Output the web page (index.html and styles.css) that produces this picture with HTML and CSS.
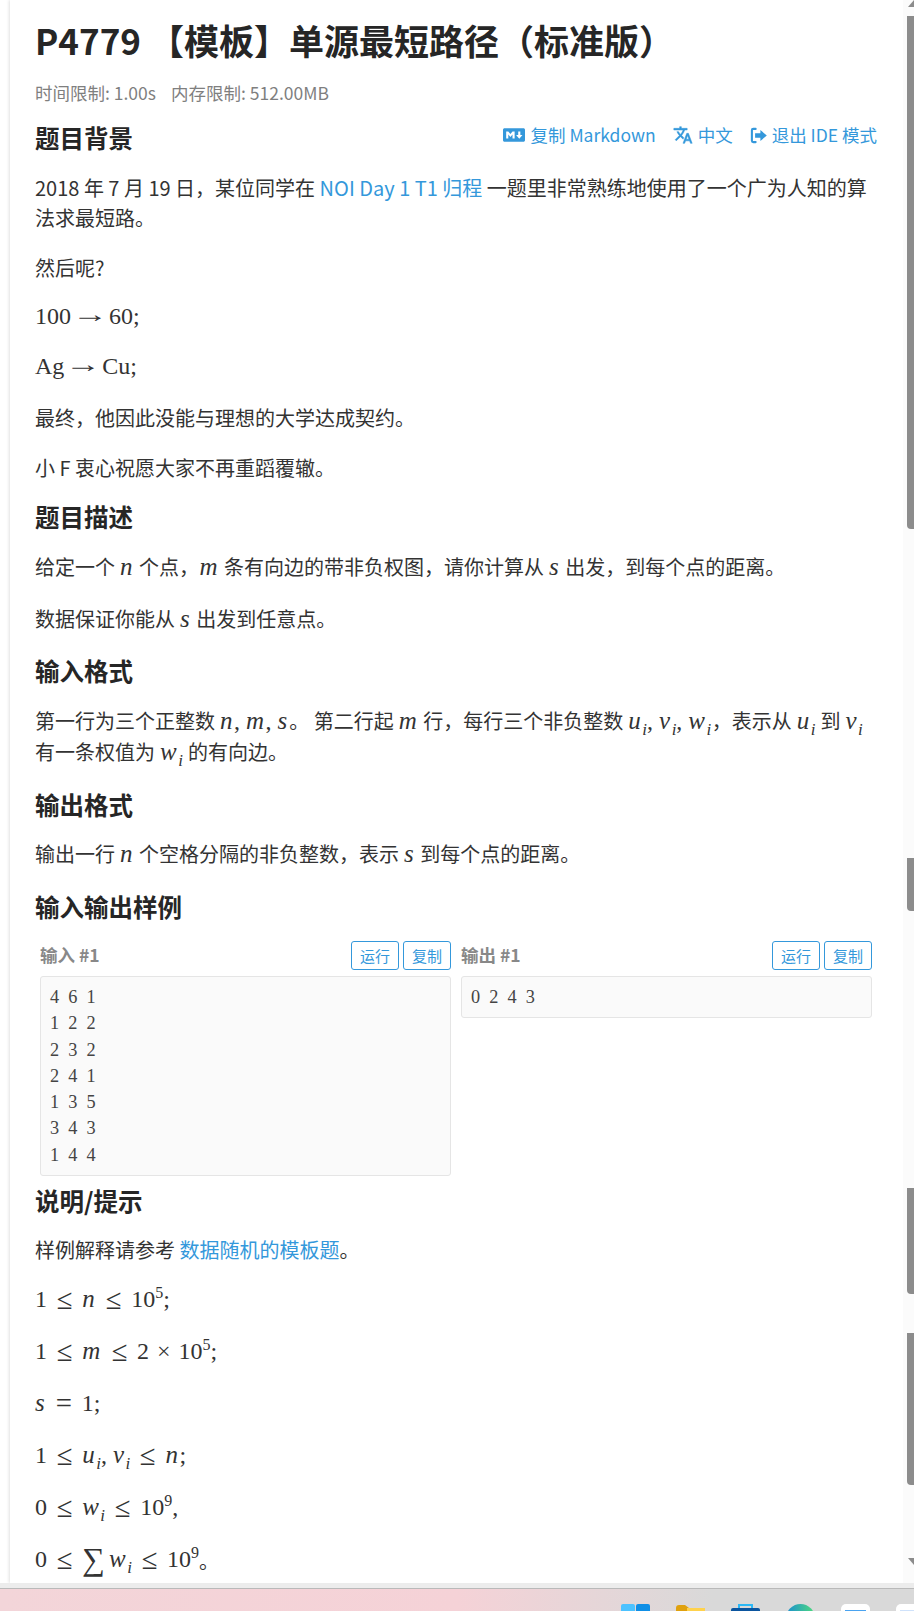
FILE: index.html
```html
<!DOCTYPE html>
<html lang="zh-CN">
<head>
  <meta charset="UTF-8">
  <title>P4779 【模板】单源最短路径（标准版）</title>
  <link rel="stylesheet" href="styles.css">
</head>
<body>
  <div class="window">
    <main class="content">
      <h1>P4779 【模板】单源最短路径（标准版）</h1>
      <div class="limits"><span>时间限制: 1.00s</span><span>内存限制: 512.00MB</span></div>

      <div class="section-head">
        <h2>题目背景</h2>
        <div class="actions">
          <a class="action">
            <svg class="icon icon-md" viewBox="0 0 640 512"><path d="M593.8 59.1H46.2C20.7 59.1 0 79.8 0 105.2v301.5c0 25.5 20.7 46.2 46.2 46.2h547.7c25.5 0 46.2-20.7 46.1-46.1V105.2c0-25.4-20.7-46.1-46.2-46.1zM338.5 360.6H277v-120l-61.5 76.9-61.5-76.9v120H92.3V151.4h61.5l61.5 76.9 61.5-76.9h61.5v209.2zm135.3 3.1L381.5 256H443V151.4h61.5V256H566z"/></svg>
            复制 Markdown
          </a>
          <a class="action">
            <svg class="icon icon-lang" viewBox="0 0 24 24"><path d="M12.87,15.07L10.33,12.56L10.36,12.53C12.1,10.59 13.34,8.36 14.07,6H17V4H10V2H8V4H1V6H12.17C11.5,7.92 10.44,9.75 9,11.35C8.07,10.32 7.3,9.19 6.69,8H4.69C5.42,9.63 6.42,11.17 7.67,12.56L2.58,17.58L4,19L9,14L12.11,17.11L12.87,15.07M18.5,10H16.5L12,22H14L15.12,19H19.87L21,22H23L18.5,10M15.88,17L17.5,12.67L19.12,17H15.88Z"/></svg>
            中文
          </a>
          <a class="action">
            <svg class="icon icon-exit" viewBox="0 0 18 18"><path d="M6 2H3.5A1.5 1.5 0 0 0 2 3.5v11A1.5 1.5 0 0 0 3.5 16H6" fill="none" stroke="currentColor" stroke-width="2.2" stroke-linecap="round"/><path d="M11 3.2L17.8 9 11 14.8V11.4H5.4V6.6H11z"/></svg>
            退出 IDE 模式
          </a>
        </div>
      </div>
      <p>2018 年 7 月 19 日，某位同学在 <a class="link">NOI Day 1 T1 归程</a> 一题里非常熟练地使用了一个广为人知的算法求最短路。</p>
      <p>然后呢?</p>
      <p class="formula"><span class="m">100<span class="arrow">→</span>60;</span></p>
      <p class="formula"><span class="m">Ag<span class="arrow">→</span>Cu;</span></p>
      <p>最终，他因此没能与理想的大学达成契约。</p>
      <p>小 F 衷心祝愿大家不再重蹈覆辙。</p>

      <h2 class="tight">题目描述</h2>
      <p class="tall">给定一个 <span class="m"><i>n</i></span> 个点，<span class="m"><i>m</i></span> 条有向边的带非负权图，请你计算从 <span class="m"><i>s</i></span> 出发，到每个点的距离。</p>
      <p class="tall">数据保证你能从 <span class="m"><i>s</i></span> 出发到任意点。</p>

      <h2>输入格式</h2>
      <p class="mid">第一行为三个正整数 <span class="m"><i>n</i>, <i>m</i>, <i>s</i></span>。 第二行起 <span class="m"><i>m</i></span> 行，每行三个非负整数 <span class="m"><i>u<sub>i</sub></i>, <i>v<sub>i</sub></i>, <i>w<sub>i</sub></i></span>，表示从 <span class="m"><i>u<sub>i</sub></i></span> 到 <span class="m"><i>v<sub>i</sub></i></span> 有一条权值为 <span class="m"><i>w<sub>i</sub></i></span> 的有向边。</p>

      <h2>输出格式</h2>
      <p>输出一行 <span class="m"><i>n</i></span> 个空格分隔的非负整数，表示 <span class="m"><i>s</i></span> 到每个点的距离。</p>

      <h2 class="loose">输入输出样例</h2>
      <div class="samples">
        <div class="sample">
          <div class="sample-head">
            <span class="sample-title">输入 #1</span>
            <div class="sample-btns"><button>运行</button><button>复制</button></div>
          </div>
          <pre>4 6 1
1 2 2
2 3 2
2 4 1
1 3 5
3 4 3
1 4 4</pre>
        </div>
        <div class="sample">
          <div class="sample-head">
            <span class="sample-title">输出 #1</span>
            <div class="sample-btns"><button>运行</button><button>复制</button></div>
          </div>
          <pre>0 2 4 3</pre>
        </div>
      </div>

      <h2 class="after-samples">说明/提示</h2>
      <p>样例解释请参考 <a class="link">数据随机的模板题</a>。</p>
      <p class="tall formula"><span class="m">1<span class="rel">≤</span><i>n</i><span class="rel">≤</span>10<sup>5</sup>;</span></p>
      <p class="tall formula"><span class="m">1<span class="rel">≤</span><i>m</i><span class="rel">≤</span>2<span class="bin">×</span>10<sup>5</sup>;</span></p>
      <p class="tall formula"><span class="m"><i>s</i><span class="rel">=</span>1;</span></p>
      <p class="tall formula"><span class="m">1<span class="rel">≤</span><i>u<sub>i</sub></i>, <i>v<sub>i</sub></i><span class="rel">≤</span><i>n</i>;</span></p>
      <p class="tall formula"><span class="m">0<span class="rel">≤</span><i>w<sub>i</sub></i><span class="rel">≤</span>10<sup>9</sup>,</span></p>
      <p class="tall formula"><span class="m">0<span class="rel">≤</span><span class="sum">∑</span><i>w<sub>i</sub></i><span class="rel">≤</span>10<sup>9</sup></span>。</p>
    </main>

    <div class="scrollbar">
      <div class="arrow-up"></div>
      <div class="thumb thumb-1"></div>
      <div class="thumb thumb-2"></div>
      <div class="thumb thumb-3"></div>
      <div class="thumb thumb-4"></div>
      <div class="arrow-down"></div>
    </div>
  </div>

  <footer class="taskbar">
    <svg class="task-icon" viewBox="0 0 29 29">
      <rect width="14" height="14" rx="2" fill="#4cc2ff"/>
      <rect x="15" width="14" height="14" rx="2" fill="#0f8fe6"/>
      <rect y="15" width="14" height="14" fill="#1a9ff0"/>
      <rect x="15" y="15" width="14" height="14" fill="#0a6fc4"/>
    </svg>
    <svg class="task-icon" viewBox="0 0 29 29">
      <path d="M0 4a3 3 0 0 1 3-3h6l4 3h16v25H0z" fill="#e0a10e"/>
      <rect y="3" width="29" height="26" fill="#ffd24d" clip-path="inset(1px 0 0 11px)"/>
    </svg>
    <svg class="task-icon" viewBox="0 0 29 29">
      <path d="M8 5V1h13v4" fill="none" stroke="#2bb8f5" stroke-width="2"/>
      <rect y="4" width="29" height="25" rx="2" fill="#0b559f"/>
    </svg>
    <svg class="task-icon" viewBox="0 0 29 29">
      <defs>
        <linearGradient id="edgeFill" x1="0" y1="0" x2="1" y2="0">
          <stop offset="0" stop-color="#1a8fd0"/>
          <stop offset="1" stop-color="#4fdc7c"/>
        </linearGradient>
      </defs>
      <circle cx="14.5" cy="14.5" r="14.5" fill="url(#edgeFill)"/>
    </svg>
    <div class="task-tile"><span></span></div>
    <div class="task-tile task-tile-cut"><span></span></div>
  </footer>
</body>
</html>
```

FILE: styles.css
```css
* {
  box-sizing: border-box;
}
html, body {
  margin: 0;
  height: 100%;
}
body {
  display: flex;
  flex-direction: column;
  overflow: hidden;
  background: #fff;
  color: #333;
  font-family: "Noto Sans CJK SC", "Noto Sans", sans-serif;
  font-size: 20px;
  line-height: 30px;
}
.window {
  flex: 1;
  min-height: 0;
  display: flex;
  overflow: hidden;
}
.content {
  flex: 1;
  min-width: 0;
  margin-left: 10px;
  padding: 16px 26px 0 25px;
  box-shadow: -1px 0 3px rgba(0,0,0,0.12);
}
h1 {
  margin: 0;
  font-size: 35px;
  line-height: 48px;
  font-weight: 700;
  color: #262626;
}
.limits {
  margin-top: 16px;
  display: flex;
  gap: 15px;
  font-size: 17.5px;
  line-height: 26px;
  color: #7f7f7f;
}
h2 {
  margin: -2px 0 16px;
  font-size: 24.5px;
  line-height: 36px;
  font-weight: 700;
  color: #262626;
}
h2.tight {
  margin-top: -4px;
}
h2.loose {
  margin-top: 0;
}
.section-head {
  margin-top: 14px;
  display: flex;
  justify-content: space-between;
}
.section-head h2 {
  margin-top: 0;
  margin-bottom: 17px;
}
.actions {
  margin-top: 2px;
  display: flex;
  gap: 17px;
  font-size: 17.5px;
  line-height: 26px;
}
.action {
  display: flex;
  align-items: center;
  gap: 5px;
  height: 26px;
  color: #3498db;
}
.icon {
  fill: currentColor;
  flex: none;
}
.icon-md {
  width: 22px;
  height: 18px;
}
.icon-lang {
  width: 20px;
  height: 20px;
  stroke: currentColor;
  stroke-width: 0.6;
}
.icon-exit {
  width: 17px;
  height: 17px;
}
p {
  margin: 0 0 20px;
}
p.tall {
  line-height: 32px;
}
p.mid {
  margin-bottom: 22px;
  line-height: 31px;
}
.link {
  color: #3498db;
}
.m {
  margin: 0 0.5px;
  font-family: "Liberation Serif", serif;
  font-size: 24px;
  line-height: 1;
}
.formula .m {
  margin: 0;
  vertical-align: 2px;
}
.m i {
  font-size: 25px;
  font-style: italic;
  letter-spacing: 1.5px;
}
.rel {
  display: inline-block;
  margin: 0 11px;
  transform: scale(1.2);
}
.arrow {
  display: inline-block;
  margin: 0 7px;
  transform: translateY(-2px) scaleX(1.5);
}
.bin {
  margin: 0 8px;
}
.sum {
  margin-right: 4px;
  font-size: 32px;
  line-height: 0;
  vertical-align: -3px;
}
sub, sup {
  font-size: 17px;
  line-height: 0;
  letter-spacing: 0;
}
sup {
  font-size: 16px;
}
sub {
  font-style: italic;
}
.samples {
  padding: 0 5px;
  display: grid;
  grid-template-columns: 1fr 1fr;
  gap: 10px;
  align-items: start;
}
.sample-head {
  height: 35px;
  display: flex;
  justify-content: space-between;
}
.sample-title {
  font-size: 17.5px;
  line-height: 28px;
  font-weight: 700;
  color: #888;
}
.sample-btns {
  display: flex;
  gap: 4px;
}
button {
  width: 48px;
  height: 29px;
  padding: 0;
  background: #fff;
  border: 1px solid #3498db;
  border-radius: 3px;
  color: #3498db;
  font-family: inherit;
  font-size: 15px;
  line-height: 27px;
}
pre {
  margin: 0;
  padding: 7px 9px;
  background: #fafafa;
  border: 1px solid #e5e5e5;
  border-radius: 3px;
  font-family: "Liberation Serif", serif;
  font-size: 18.3px;
  line-height: 26.25px;
  word-spacing: 0.25em;
  color: #444;
}
h2.after-samples {
  margin-top: 7px;
  margin-bottom: 16px;
}
.scrollbar {
  flex: none;
  width: 11px;
  display: flex;
  flex-direction: column;
  align-items: flex-end;
  background: #fbfbfb;
}
.thumb {
  width: 7px;
  flex: none;
  background: #8c8c8c;
  border-bottom-left-radius: 4px;
}
.arrow-up {
  flex: none;
  width: 6px;
  height: 7px;
  background: #8c8c8c;
  clip-path: polygon(100% 0, 100% 100%, 0 100%);
}
.arrow-down {
  flex: none;
  width: 6px;
  height: 7px;
  margin-top: 73px;
  background: #8c8c8c;
  clip-path: polygon(0 0, 100% 0, 100% 100%);
}
.thumb-1 {
  margin-top: 9px;
  height: 513px;
}
.thumb-2 {
  margin-top: 329px;
  height: 53px;
}
.thumb-3 {
  margin-top: 277px;
  height: 106px;
}
.thumb-4 {
  margin-top: 39px;
  height: 152px;
}
.taskbar {
  flex: none;
  height: 28px;
  padding: 16px 0 0 621px;
  display: flex;
  gap: 26px;
  overflow: hidden;
  background: linear-gradient(90deg, #f3d5d9 0%, #f5d2d7 50%, #d9d9d9 78%, #d9d9d9 100%);
  border-top: 5px solid #ececec;
  box-shadow: inset 0 1px 0 #b9b9b9;
}
.task-icon {
  flex: none;
  width: 29px;
  height: 29px;
}
.task-tile {
  flex: none;
  width: 29px;
  height: 29px;
  padding: 6px 4px;
  background: #fff;
  border-radius: 5px;
}
.task-tile span {
  display: block;
  height: 16px;
  background: #4aa3f0;
}
.task-tile-cut span {
  background: #cfe2fb;
}
```
